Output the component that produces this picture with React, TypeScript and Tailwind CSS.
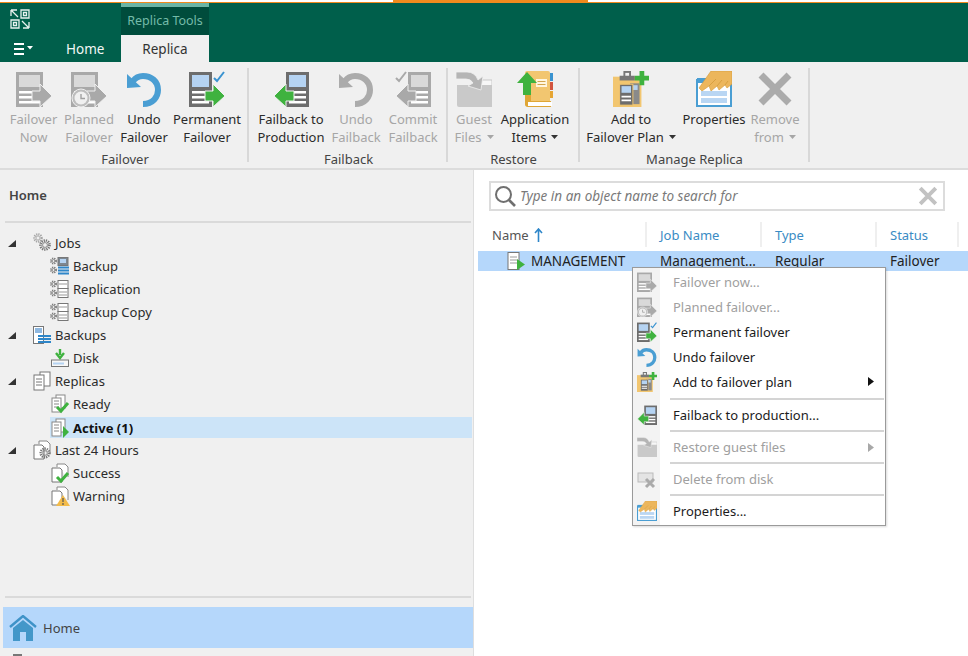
import React from 'react';

const GRAY = '#a9a9a9';

// server box with an arrow, used for failover / failback icons
function ServerIcon({ body = GRAY, screen = '#d9d9d9', arrow = GRAY, back = false, check, clock = false, wide = false, size = 36 }: { body?: string; screen?: string; arrow?: string; back?: boolean; check?: string; clock?: boolean; wide?: boolean; size?: number }) {
  const x = back ? 13 : 0;
  const w = wide ? 27 : 23;
  return (
    <svg width={size} height={size} viewBox="0 0 36 36">
      <rect x={x} y={1} width={w} height={35} fill={body} />
      <rect x={x + 3} y={4} width={w - 6} height={12} fill={screen} />
      <rect x={x + 3} y={20} width={w - 6} height={2.5} fill="#fff" />
      <rect x={x + 3} y={25} width={w - 6} height={2.5} fill="#fff" />
      <rect x={x + 3} y={30} width={w - 6} height={2.5} fill="#fff" />
      {back ? (
        <path d="M21 20H13V13L1 25L13 36V30H21Z" fill={arrow} stroke="#f0f0f0" strokeWidth="1" />
      ) : (
        <path d="M16 20H24V13L36 25L24 36V30H16Z" fill={arrow} stroke="#f0f0f0" strokeWidth="1" />
      )}
      {check && !back && <path d="M25 7L28 10L35 1" fill="none" stroke={check} strokeWidth="2" />}
      {check && back && <path d="M1 7L4 10L11 1" fill="none" stroke={check} strokeWidth="2" />}
      {clock && (
        <g>
          <circle cx="10" cy="27" r="9" fill="#bdbdbd" stroke="#f0f0f0" strokeWidth="1" />
          <circle cx="10" cy="27" r="6.5" fill="#f0f0f0" />
          <path d="M10 23V27.5H14" fill="none" stroke="#a0a0a0" strokeWidth="1.4" />
        </g>
      )}
    </svg>
  );
}

function UndoIcon({ color = '#4a9ed3', size = 36 }: { color?: string; size?: number }) {
  return (
    <svg width={size} height={size} viewBox="0 0 36 36">
      <path d="M17 33C27 33 32 26 32 19C32 10 25 5 17 5C13 5 10 6 7 10" fill="none" stroke={color} strokeWidth="6" />
      <path d="M1 3L1 17L15 16Z" fill={color} />
    </svg>
  );
}

function GuestIcon({ size = 36 }: { size?: number }) {
  return (
    <svg width={size} height={size} viewBox="0 0 36 36">
      <path d="M18 9H36V16H18Z" fill="#f7f7f7" stroke="#c9c9c9" />
      <path d="M1 14H36V36H3Q1 36 1 34Z" fill="#c9c9c9" />
      <path d="M0 1H11Q19 1 22 9L27 5L25 19L12 15L17 12Q15 8 10 8H0Z" fill="#b5b5b5" stroke="#f0f0f0" strokeWidth="0.8" />
    </svg>
  );
}

function BookIcon() {
  return (
    <svg width="36" height="36" viewBox="0 0 36 36">
      <rect x="8" y="0" width="25" height="35" rx="2" fill="#f2c670" />
      <path d="M8 20H14V30H34V36H11Q8 36 8 33Z" fill="#dfa636" />
      <rect x="11" y="31" width="24" height="4" fill="#fff" />
      <rect x="33" y="2" width="3" height="8" fill="#3a93d0" />
      <rect x="33" y="11" width="3" height="8" fill="#d2553f" />
      <rect x="33" y="20" width="3" height="7" fill="#e6a533" />
      <rect x="19" y="8" width="11" height="8" fill="#fff6e0" />
      <path d="M20.5 10.5H28.5M20.5 13.5H28.5" stroke="#d3a64e" strokeWidth="1.2" />
      <path d="M10 1L20 12H14V24H6V12H0Z" fill="#3fb23f" />
    </svg>
  );
}

function PlanIcon({ size = 36 }: { size?: number }) {
  return (
    <svg width={size} height={size} viewBox="0 0 38 38">
      <rect x="0" y="6" width="30" height="32" fill="#f2c670" />
      <rect x="7" y="5" width="16" height="5" fill="#777" />
      <rect x="12" y="1" width="6" height="6" fill="none" stroke="#777" strokeWidth="2" />
      <rect x="18" y="13" width="10" height="22" fill="#8a8a8a" />
      <rect x="20" y="15" width="6" height="5" fill="#b5d3f2" />
      <rect x="7" y="14" width="14" height="22" fill="#6d6d6d" stroke="#f2c670" />
      <rect x="9" y="16" width="10" height="7" fill="#b5d3f2" />
      <path d="M9 27H19M9 31H19" stroke="#fff" strokeWidth="2" />
      <path d="M28 0H33V5H38V10H33V15H28V10H23V5H28Z" fill="#3fb23f" />
    </svg>
  );
}

function PropertiesIcon({ size = 36 }: { size?: number }) {
  return (
    <svg width={size} height={size} viewBox="0 0 36 36">
      <rect x="1" y="9" width="34" height="26" fill="#fff" stroke="#4a9ed3" strokeWidth="2" />
      <rect x="1" y="7" width="14" height="5" fill="#4a9ed3" />
      <rect x="5" y="20" width="26" height="5" fill="#b9d6f3" />
      <rect x="5" y="27" width="26" height="5" fill="#b9d6f3" />
      <path d="M36 0H15L3 17L6 20L13 15L15 20L21 15L23 19L29 14L31 17L36 13Z" fill="#ecb65c" stroke="#d39a3a" strokeWidth="0.6" />
      <path d="M13 15L20 8M21 15L26 9M29 14L32 10" stroke="#d39a3a" strokeWidth="0.8" fill="none" />
    </svg>
  );
}

function CrossIcon({ color = '#ababab', size = 36, weight = 7 }: { color?: string; size?: number; weight?: number }) {
  return (
    <svg width={size} height={size} viewBox="0 0 36 36">
      <path d="M4 4L32 32M32 4L4 32" stroke={color} strokeWidth={weight} fill="none" />
    </svg>
  );
}

function Gear({ x, y, r, color = '#8a8a8a' }: { x: number; y: number; r: number; color?: string }) {
  return (
    <g>
      <circle cx={x} cy={y} r={r} fill="none" stroke={color} strokeWidth={r * 0.65} strokeDasharray="1.2 0.9" />
      <circle cx={x} cy={y} r={r * 0.55} fill="none" stroke={color} strokeWidth="0.8" />
    </g>
  );
}

function TreeDoc({ kind }: { kind: string }) {
  return (
    <svg width="20" height="20" viewBox="0 0 20 20">
      {kind === 'jobs' && (
        <g>
          <Gear x={6} y={5} r={3.6} color="#a5a5a5" />
          <Gear x={13} y={12} r={4.4} color="#777" />
        </g>
      )}
      {(kind === 'backup' || kind === 'replication' || kind === 'copy') && (
        <g>
          <Gear x={3.5} y={5} r={2.6} color="#777" />
          <Gear x={3.5} y={14} r={2.6} color="#777" />
          <rect x="8" y="1.5" width="10" height="8" fill={kind === 'backup' ? '#7d8791' : '#fff'} stroke="#777" />
          {kind === 'backup' ? (
            <g>
              <rect x="10" y="3" width="6" height="4" fill="#b5d3f2" />
              <path d="M8 11.5H19M8 14.5H19M8 17.5H19" stroke="#2e86c9" strokeWidth="1.8" />
            </g>
          ) : (
            <g>
              <rect x="8" y="9.5" width="10" height="9" fill="#fff" stroke="#777" />
              <path d="M9 13H17M9 16H17M9 5H17" stroke="#999" strokeWidth="1" />
            </g>
          )}
        </g>
      )}
      {kind === 'backups' && (
        <g>
          <rect x="1.5" y="1.5" width="10" height="17" fill="#fff" stroke="#777" />
          <rect x="3" y="3" width="7" height="5" fill="#8fb8e0" />
          <path d="M6 11H19M6 14H19M6 17H19" stroke="#2e86c9" strokeWidth="1.8" />
        </g>
      )}
      {kind === 'disk' && (
        <g>
          <rect x="1.5" y="12" width="17" height="6.5" fill="#f7f7f7" stroke="#777" />
          <path d="M3 15.5H14" stroke="#b5d3f2" strokeWidth="2" />
          <path d="M10 1V7M6 5L10 10L14 5" fill="none" stroke="#3fb23f" strokeWidth="2.4" />
        </g>
      )}
      {kind === 'replicas' && (
        <g>
          <rect x="8" y="1" width="10" height="14" fill="#fff" stroke="#777" />
          <rect x="2" y="4" width="10" height="15" fill="#fff" stroke="#777" />
          <path d="M4 8H10M4 11H10M4 14H10" stroke="#777" />
        </g>
      )}
      {(kind === 'ready' || kind === 'active') && (
        <g>
          <rect x="6" y="1" width="9" height="13" fill="#fff" stroke="#888" />
          <rect x="2" y="4" width="9" height="14" fill="#fff" stroke="#888" />
          <path d="M4 7H9M4 10H9M4 13H9" stroke="#888" />
          {kind === 'ready' ? (
            <path d="M7 13L11 17L18 9" fill="none" stroke="#3fb23f" strokeWidth="3" />
          ) : (
            <path d="M13 8L19 14L13 20Z" fill="#3fb23f" />
          )}
        </g>
      )}
      {(kind === 'last' || kind === 'success' || kind === 'warning') && (
        <g>
          <path d="M7 4V1H15L18 4V14" fill="#fff" stroke="#888" />
          <path d="M2 5H10L12 7V19H2Z" fill="#fff" stroke="#777" />
          {kind === 'last' && <Gear x={13} y={13} r={4.2} color="#777" />}
          {kind === 'success' && <path d="M7 14L11 18L18 10" fill="none" stroke="#3fb23f" strokeWidth="3" />}
          {kind === 'warning' && (
            <g>
              <path d="M13 9L20 20H6Z" fill="#f2bb4a" />
              <path d="M13 12V16M13 17V19" stroke="#555" strokeWidth="1.2" />
            </g>
          )}
        </g>
      )}
    </svg>
  );
}

const ribbonGroups = [
  {
    name: 'Failover',
    cls: 'w-[246px] pl-[3px]',
    labelCls: '-ml-[3px]',
    items: [
      { lines: ['Failover', 'Now'], off: true, w: 'w-[55px]', icon: <ServerIcon wide /> },
      { lines: ['Planned', 'Failover'], off: true, w: 'w-[56px]', icon: <ServerIcon wide clock /> },
      { lines: ['Undo', 'Failover'], w: 'w-[54px]', icon: <UndoIcon /> },
      { lines: ['Permanent', 'Failover'], w: 'w-[72px]', icon: <ServerIcon body="#6d6d6d" screen="#b5d3f2" arrow="#3fb23f" check="#3a93d0" /> },
    ],
  },
  {
    name: 'Failback',
    cls: 'w-[199px] pl-[6px]',
    labelCls: '-ml-[4px]',
    items: [
      { lines: ['Failback to', 'Production'], w: 'w-[72px]', icon: <ServerIcon back body="#6d6d6d" screen="#b5d3f2" arrow="#3fb23f" /> },
      { lines: ['Undo', 'Failback'], off: true, w: 'w-[58px]', icon: <UndoIcon color="#ababab" /> },
      { lines: ['Commit', 'Failback'], off: true, w: 'w-[56px]', icon: <ServerIcon back check={GRAY} /> },
    ],
  },
  {
    name: 'Restore',
    cls: 'w-[132px] pl-[1px]',
    labelCls: '',
    items: [
      { lines: ['Guest', 'Files'], caret: true, off: true, w: 'w-[50px]', icon: <GuestIcon /> },
      { lines: ['Application', 'Items'], caret: true, w: 'w-[72px]', icon: <BookIcon /> },
    ],
  },
  {
    name: 'Manage Replica',
    cls: 'w-[230px] pl-[7px]',
    labelCls: '-ml-[6px]',
    items: [
      { lines: ['Add to', 'Failover Plan'], caret: true, w: 'w-[88px]', icon: <PlanIcon /> },
      { lines: ['Properties', ''], w: 'w-[78px]', icon: <PropertiesIcon /> },
      { lines: ['Remove', 'from'], caret: true, off: true, w: 'w-[44px]', icon: <CrossIcon /> },
    ],
  },
];

const tree = [
  { label: 'Jobs', kind: 'jobs', top: true },
  { label: 'Backup', kind: 'backup' },
  { label: 'Replication', kind: 'replication' },
  { label: 'Backup Copy', kind: 'copy' },
  { label: 'Backups', kind: 'backups', top: true },
  { label: 'Disk', kind: 'disk' },
  { label: 'Replicas', kind: 'replicas', top: true },
  { label: 'Ready', kind: 'ready' },
  { label: 'Active (1)', kind: 'active', selected: true },
  { label: 'Last 24 Hours', kind: 'last', top: true },
  { label: 'Success', kind: 'success' },
  { label: 'Warning', kind: 'warning' },
];

function MenuRow({ label, icon, off, arrow, tall }: { label: string; icon: React.ReactNode; off?: boolean; arrow?: boolean; tall?: boolean }) {
  return (
    <div className={`flex items-center ${tall ? 'h-[25px]' : 'h-[24px]'}`}>
      <div className="w-[27px] flex justify-center shrink-0">{icon}</div>
      <span className={`ml-[13px] ${off ? 'text-[#a0a0a0]' : 'text-[#1c1c1c]'}`}>{label}</span>
      {arrow && (
        <svg className="ml-auto mr-[11px]" width="6" height="9" viewBox="0 0 6 9">
          <path d="M0 0L6 4.5L0 9Z" fill={off ? '#a8a8a8' : '#111'} />
        </svg>
      )}
    </div>
  );
}

function MenuSep() {
  return (
    <div className="h-[8px] flex items-center pl-[37px] pr-px">
      <div className="h-[2px] w-full bg-[#d4d4d4]" />
    </div>
  );
}

export default function App() {
  return (
    <div className="w-[968px] h-[656px] overflow-hidden flex flex-col bg-[#f0f0f0] font-['Noto_Sans',sans-serif] text-[13px] leading-[18px] text-[#2b2b2b]">
      {/* top strip */}
      <div className="h-[3px] flex bg-white border-b-[1px] border-[#f08a1d]">
        <div className="w-[393px]" />
        <div className="w-[195px] bg-[#f08a1d]" />
      </div>

      {/* title bar with tabs */}
      <div className="h-[59px] bg-[#005f4b] flex text-white">
        <div className="w-[121px] flex flex-col">
          <div className="h-[32px] pl-[10px] pt-[6px]">
            <svg width="20" height="20" viewBox="0 0 20 20" fill="none" stroke="#e8f2ef" strokeWidth="1.3">
              <path d="M1 1H7M1 1V7M1 1L8 8" />
              <path d="M11 1H19V9H11Z" />
              <path d="M13.5 3.5H16.5V6.5H13.5Z" />
              <path d="M1 11V19H9V11Z" />
              <path d="M3.5 13.5H6.5V16.5H3.5Z" />
              <path d="M19 19H13M19 19V13M19 19L12 12" />
            </svg>
          </div>
          <div className="flex-1 flex items-center">
            <svg className="ml-[14px]" width="20" height="12" viewBox="0 0 20 12">
              <path d="M0 1H10M0 6H10M0 11H10" stroke="#fff" strokeWidth="2" />
              <path d="M13 3H19L16 6.5Z" fill="#fff" />
            </svg>
            <span className="ml-[32px] text-[#f2f7f5] text-[13.5px]">Home</span>
          </div>
        </div>
        <div className="w-[88px] flex flex-col">
          <div className="h-[32px] bg-[#004c3c] border-t-[4px] border-[#6bb5a5] text-[#74bba9] text-[12.5px] pb-px flex items-center justify-center">
            Replica Tools
          </div>
          <div className="flex-1 bg-[#f0f0f0] text-[#333] text-[13.5px] flex items-center justify-center">Replica</div>
        </div>
      </div>

      {/* ribbon */}
      <div className="h-[108px] flex border-b-2 border-[#dcdcdc] pl-[3px]">
        {ribbonGroups.map((g) => (
          <div key={g.name} className={`${g.cls} flex flex-col my-[6px] border-r-2 border-[#d8d8d8] shrink-0`}>
            <div className="flex">
              {g.items.map((b) => (
                <div key={b.lines[0]} className={`${b.w} flex flex-col items-center shrink-0 ${b.off ? 'text-[#a6a6a6]' : 'text-[#2b2b2b]'}`}>
                  <div className="h-[41px] pt-[3px]">{b.icon}</div>
                  <div className="h-[18px] mt-[1px] whitespace-nowrap">{b.lines[0]}</div>
                  <div className="h-[18px] whitespace-nowrap flex items-center">
                    {b.lines[1]}
                    {b.caret && (
                      <svg className="ml-[5px]" width="7" height="4" viewBox="0 0 7 4">
                        <path d="M0 0H7L3.5 4Z" fill={b.off ? '#a6a6a6' : '#333'} />
                      </svg>
                    )}
                  </div>
                </div>
              ))}
            </div>
            <div className={`text-center mt-[4px] text-[#444] ${g.labelCls}`}>{g.name}</div>
          </div>
        ))}
      </div>

      <div className="flex-1 flex min-h-0">
        {/* left navigation */}
        <div className="w-[474px] flex flex-col border-r-[1px] border-[#dedede] shrink-0">
          <div className="h-[51px] pl-[9px] pt-[16px] font-semibold text-[#444] shrink-0">Home</div>
          <div className="h-[2px] ml-[5px] mr-[2px] bg-[#dadada] shrink-0" />
          <div className="mt-[8px]">
            {tree.map((t) => (
              <div
                key={t.label}
                className={`h-[23px] ml-[3px] mr-px flex items-center ${t.selected ? 'pt-[2px] bg-[#cce4f8] bg-clip-content font-bold text-[#111]' : 'py-px'} ${t.top ? 'pl-[5px]' : 'pl-[47px]'}`}
              >
                {t.top && (
                  <svg className="mr-[16px]" width="8" height="8" viewBox="0 0 8 8">
                    <path d="M8 1V8H0Z" fill="#333" />
                  </svg>
                )}
                <TreeDoc kind={t.kind} />
                <span className="ml-[3px]">{t.label}</span>
              </div>
            ))}
          </div>
          <div className="mt-auto h-[2px] ml-[5px] mr-[2px] bg-[#dadada] shrink-0" />
          <div className="mt-[9px] h-[41px] ml-[3px] bg-[#b5d7fb] flex items-center pl-[6px] text-[#444] shrink-0">
            <svg width="28" height="26" viewBox="0 0 28 26">
              <path d="M1 12L14 1L27 12" fill="none" stroke="#3f93c8" strokeWidth="2.4" />
              <path d="M4 13L14 5L24 13V26H17V17H11V26H4Z" fill="#4397c9" />
            </svg>
            <span className="ml-[6px]">Home</span>
          </div>
          <div className="h-[8px] pl-[13px] pt-[6px] shrink-0">
            <div className="w-[9px] h-[4px] bg-[#777]" />
          </div>
        </div>

        {/* right pane */}
        <div className="flex-1 bg-white relative">
          <div className="mt-[11px] ml-[15px] w-[456px] h-[30px] border-2 border-[#dcdcdc] flex items-center pl-[3px] pr-[5px] text-[13.5px]">
            <svg width="22" height="22" viewBox="0 0 22 22" fill="none" stroke="#6f6f6f" strokeWidth="2">
              <circle cx="9.5" cy="9.5" r="7.5" />
              <path d="M15 15L21 21" strokeWidth="2.6" />
            </svg>
            <span className="ml-[4px] italic text-[#7a7a7a]">Type in an object name to search for</span>
            <div className="ml-auto">
              <CrossIcon color="#c2c2c2" size={20} weight={7} />
            </div>
          </div>

          <div className="flex mt-[11px] h-[25px] items-center">
            <div className="w-[173px] pl-[18px] h-full flex items-center border-r-2 border-[#efefef] text-[#555]">
              Name
              <svg className="ml-[5px]" width="9" height="14" viewBox="0 0 9 14">
                <path d="M4.5 14V2M1 5L4.5 1L8 5" fill="none" stroke="#2e86c9" strokeWidth="1.6" />
              </svg>
            </div>
            <div className="w-[115px] pl-[13px] h-full flex items-center border-r-2 border-[#efefef] text-[#3a8bc4]">Job Name</div>
            <div className="w-[115px] pl-[13px] h-full flex items-center border-r-2 border-[#efefef] text-[#3a8bc4]">Type</div>
            <div className="w-[82px] pl-[13px] h-full flex items-center border-r-2 border-[#efefef] text-[#3a8bc4]">Status</div>
          </div>

          <div className="mt-[4px] ml-[4px] h-[20px] bg-[#b5d7fb] flex items-center text-[#222] text-[13.5px]">
            <div className="w-[168px] pl-[29px] flex items-center">
              <svg width="18" height="18" viewBox="0 0 18 18">
                <rect x="1" y="0.5" width="11" height="17" fill="#fff" stroke="#777" />
                <path d="M3 5H10M3 8H10M3 11H10" stroke="#9a9a9a" />
                <path d="M10 7L18 12.5L10 18Z" fill="#3fb23f" />
              </svg>
              <span className="ml-[6px] whitespace-nowrap">MANAGEMENT</span>
            </div>
            <div className="w-[115px] pl-[14px] whitespace-nowrap">Management...</div>
            <div className="w-[115px] pl-[14px]">Regular</div>
            <div className="pl-[14px]">Failover</div>
          </div>

          {/* context menu */}
          <div className="absolute left-[158px] top-[97px] w-[254px] h-[259px] border border-[#9a9a9a] pt-px pb-[2px] shadow-[1px_1px_2px_rgba(0,0,0,0.15)] bg-[linear-gradient(to_right,#f3f3f3_27px,white_27px)] text-[#1c1c1c]">
            <MenuRow tall off label="Failover now..." icon={<ServerIcon size={20} wide />} />
            <MenuRow tall off label="Planned failover..." icon={<ServerIcon size={20} wide clock />} />
            <MenuRow tall label="Permanent failover" icon={<ServerIcon size={20} body="#6d6d6d" screen="#b5d3f2" arrow="#3fb23f" check="#3a93d0" />} />
            <MenuRow tall label="Undo failover" icon={<UndoIcon size={20} />} />
            <MenuRow tall arrow label="Add to failover plan" icon={<PlanIcon size={20} />} />
            <div className="h-px" />
            <MenuSep />
            <MenuRow label="Failback to production..." icon={<ServerIcon size={20} back body="#6d6d6d" screen="#b5d3f2" arrow="#3fb23f" />} />
            <MenuSep />
            <MenuRow off arrow label="Restore guest files" icon={<GuestIcon size={20} />} />
            <MenuSep />
            <MenuRow
              off
              label="Delete from disk"
              icon={
                <svg width="20" height="20" viewBox="0 0 20 20">
                  <rect x="1" y="4" width="15" height="9" fill="#e4e4e4" stroke="#bbb" />
                  <path d="M9 10L17 18M17 10L9 18" stroke="#aaa" strokeWidth="3" />
                </svg>
              }
            />
            <MenuSep />
            <MenuRow label="Properties..." icon={<PropertiesIcon size={20} />} />
          </div>
        </div>
      </div>
    </div>
  );
}
